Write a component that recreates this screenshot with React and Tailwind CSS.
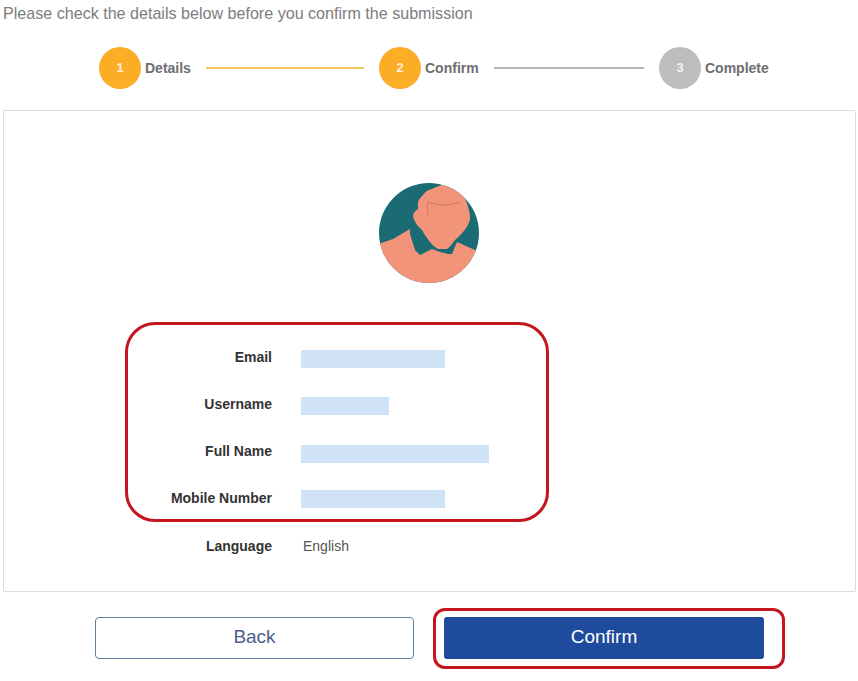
const font = "font-['Liberation_Sans',Arial,sans-serif]";

const Step = ({ num, label, active, labelWidth }) => (
  <div className="flex items-center gap-1">
    <div
      className={`w-[42px] h-[42px] rounded-full flex items-center justify-center text-[13px] font-bold text-white/80 ${
        active ? "bg-[#fbad26]" : "bg-[#bdbdbd]"
      }`}
    >
      {num}
    </div>
    <span className={`text-[14px] font-bold whitespace-nowrap text-[#6d6e71] ${labelWidth}`}>{label}</span>
  </div>
);

const Avatar = () => (
  <svg width="102" height="102" viewBox="0 0 102 102">
    <defs>
      <clipPath id="avatarClip">
        <circle cx="51" cy="51" r="50" />
      </clipPath>
    </defs>
    <g clipPath="url(#avatarClip)">
      <rect width="102" height="102" fill="#1b6b74" />
      <path
        d="M0 62 L15 57 L32 47 L32 52 L37 68 L42 73 L54 67 L62 70 L70 72 L74 72 L79 60 L97 68 L102 72 L102 102 L0 102 Z"
        fill="#f29479"
      />
      <path
        d="M45 13 C48 9 50 8 54 7 C60 4 65 2 70 2 C76 4 81 8 84 12 C87 16 89 20 90 25 C92 30 92 34 92 38 C90 43 88 47 85 50 C82 53 80 56 77 58 C74 62 72 65 69 67 L60 67 C57 65 54 63 52 60 C49 56 46 52 44 48 L39 43 C37 40 35 36 35 33 C36 30 38 28 40 27 L40 20 C41 17 43 15 45 13 Z"
        fill="#f29479"
      />
      <path
        d="M50 33 C49 28 49 24 50 20 C60 24 72 24 82 20"
        fill="none"
        stroke="#c9745c"
        strokeWidth="0.8"
      />
    </g>
  </svg>
);

const rows = [
  { label: "Email", blur: "w-[144px] mt-[3px]" },
  { label: "Username", blur: "w-[88px] mt-[3px]" },
  { label: "Full Name", blur: "w-[188px] mt-[5px]" },
  { label: "Mobile Number", blur: "w-[144px] mt-[1px]" },
];

const Row = ({ label, children }) => (
  <div className="flex items-center h-[18px]">
    <span className="w-[268px] text-right text-[14px] font-bold text-[#333]">{label}</span>
    <div className="ml-[29px]">{children}</div>
  </div>
);

const App = () => {
  return (
    <div className={`w-[858px] h-[681px] bg-white overflow-hidden ${font}`}>
      <p className="pl-[3px] pt-[4px] text-[16.1px] leading-[18px] text-[#7d7d7d]">
        Please check the details below before you confirm the submission
      </p>

      <div className="flex items-center pl-[99px] mt-[25px] h-[42px]">
        <Step num="1" label="Details" active labelWidth="w-[45px]" />
        <div className="ml-[16px] w-[158px] h-[2px] bg-[#f2c45f]" />
        <div className="ml-[15px]">
          <Step num="2" label="Confirm" active labelWidth="w-[54px]" />
        </div>
        <div className="ml-[15px] w-[150px] h-[2px] bg-[#b5b5b5]" />
        <div className="ml-[15px]">
          <Step num="3" label="Complete" labelWidth="w-[64px]" />
        </div>
      </div>

      <div className="relative ml-[3px] mt-[21px] w-[853px] h-[482px] border border-[#dcdcdc] rounded-[2px]">
        <div className="flex justify-center pt-[71px] pr-[1px]">
          <Avatar />
        </div>

        <div className="flex flex-col gap-[29px] mt-[64px]">
          {rows.map((r) => (
            <Row key={r.label} label={r.label}>
              <div className={`${r.blur} h-[18px] bg-[#d0e2f6]`} />
            </Row>
          ))}
          <div className="mt-[1px]">
            <Row label="Language">
              <span className="block pl-[2px] text-[14px] text-[#555]">English</span>
            </Row>
          </div>
        </div>

        {/* red annotation round the private rows */}
        <div className="absolute left-[121px] top-[211px] w-[424px] h-[200px] border-[3px] border-[#c4161c] rounded-[30px]" />
      </div>

      <div className="flex items-start pl-[95px] mt-[16px]">
        <button className="mt-[9px] pb-[2px] w-[319px] h-[42px] border border-[#5f7f9f] rounded-[4px] bg-white text-[19px] text-[#4a5f8a]">
          Back
        </button>
        <div className="ml-[19px] pl-[8px] pr-[18px] pt-[6px] pb-[7px] border-[3px] border-[#c4161c] rounded-[12px]">
          <button className="block pb-[2px] w-[320px] h-[42px] rounded-[3px] bg-[#1e4b9b] text-[19px] text-white">
            Confirm
          </button>
        </div>
      </div>
    </div>
  );
};

export default App;
